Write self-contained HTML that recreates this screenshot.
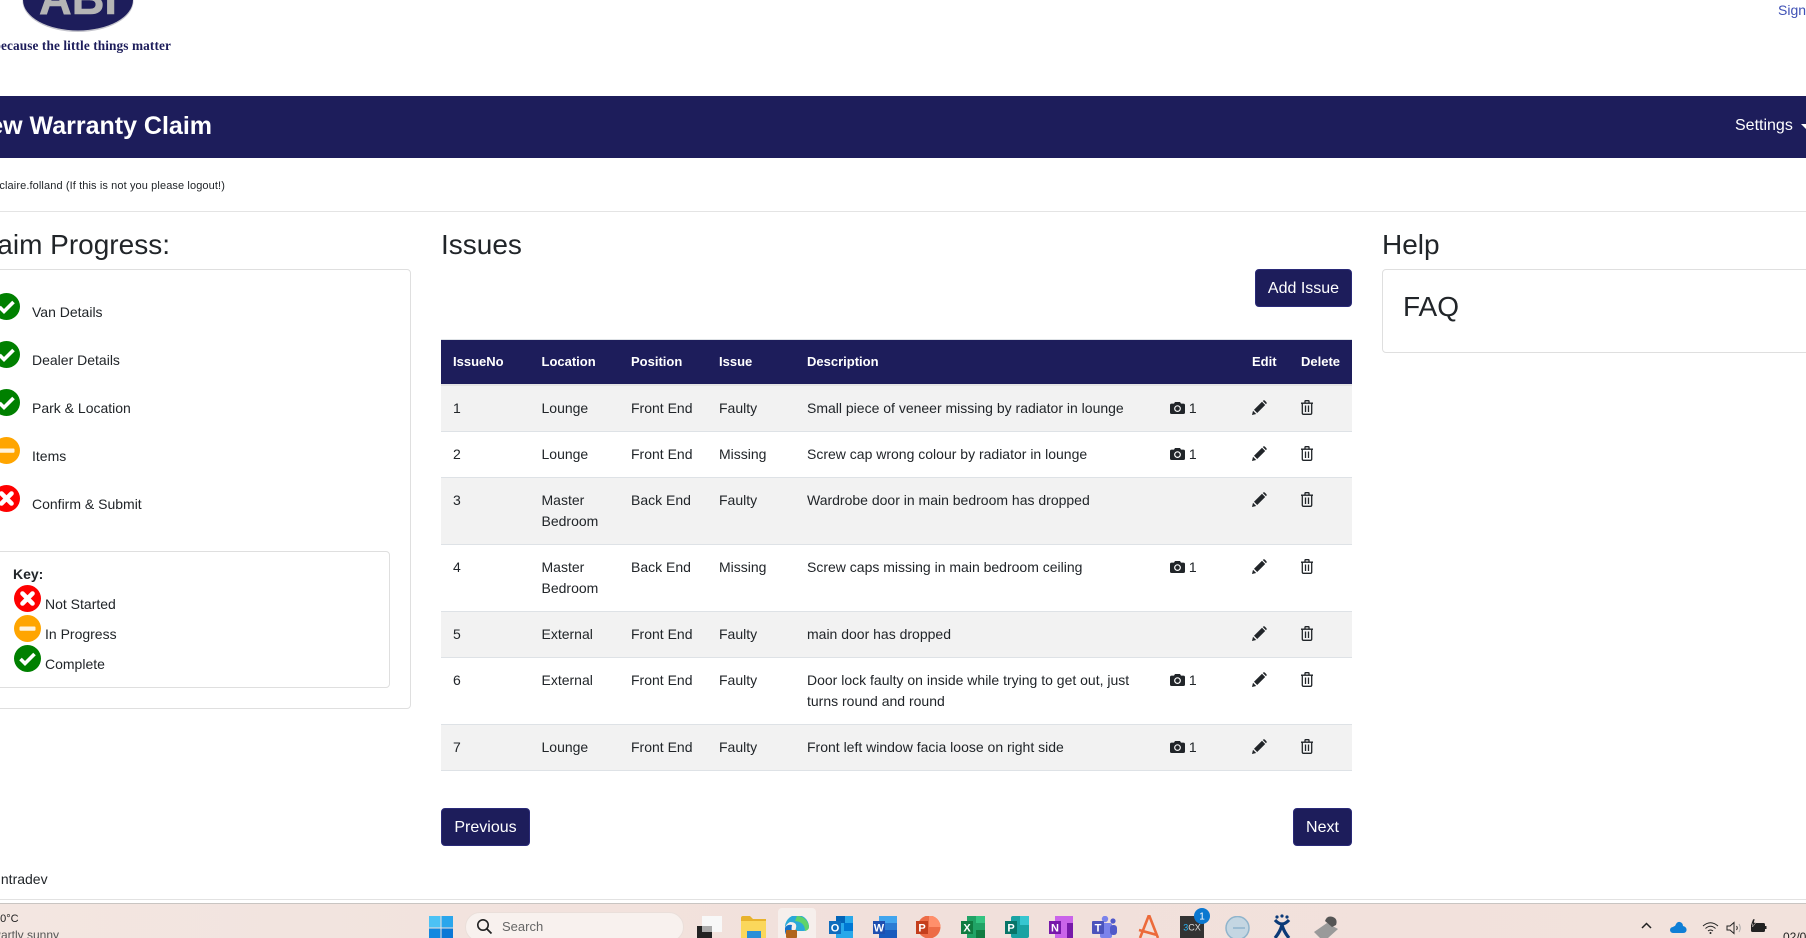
<!DOCTYPE html>
<html lang="en"><head><meta charset="utf-8"><title>New Warranty Claim</title>
<style>
html,body{margin:0;padding:0;width:1806px;height:938px;overflow:hidden;background:#fff}
body{position:relative;font-family:"Liberation Sans",Arial,sans-serif;font-size:14px;color:#212529}
.a{position:absolute;white-space:nowrap}
.h{font-size:28px;line-height:34px}
.card{position:absolute;border:1px solid #dfdfdf;border-radius:4px;box-sizing:border-box;background:#fff}
.btn{position:absolute;background:#1d1d5b;border:1px solid #2a2a78;border-radius:4px;color:#fff;font-size:16px;line-height:38px;height:38px;box-sizing:border-box;text-align:center}
table{position:absolute;left:441px;top:339px;width:911px;border-collapse:collapse;table-layout:fixed;font-size:14px;line-height:21px}
th{background:#1d1d5b;color:#fff;font-size:13px;font-weight:bold;text-align:left;padding:0 0 2px 12px;height:42px;border-top:1px solid #dee2e6;border-bottom:2px solid #e4e4e4;box-sizing:content-box}
td{padding:12px 12px 12px 12px;vertical-align:top;border-bottom:1px solid #dee2e6;overflow:visible}
tr.s td{background:#f2f2f2}
td.i{padding-left:12px;white-space:nowrap}
.ic{display:inline-block;vertical-align:top;margin-top:4px}
.st{position:absolute;width:27px;height:27px}
.tb{position:absolute}
</style></head><body>

<svg width="0" height="0" style="position:absolute">
<symbol id="ok" viewBox="0 0 27 27"><circle cx="13.5" cy="13.5" r="13.5" fill="#008000"/><path d="M6.5 14 L11 18.5 L20.5 9" fill="none" stroke="#fff" stroke-width="3.6"/></symbol>
<symbol id="pr" viewBox="0 0 27 27"><circle cx="13.5" cy="13.5" r="13.5" fill="#ffa500"/><rect x="5.5" y="11.5" width="16" height="4.2" rx="1" fill="#fff3dd"/></symbol>
<symbol id="no" viewBox="0 0 27 27"><circle cx="13.5" cy="13.5" r="13.5" fill="#ff0000"/><path d="M8.5 8.5 L18.5 18.5 M18.5 8.5 L8.5 18.5" stroke="#fff" stroke-width="4.6" stroke-linecap="round"/></symbol>
<symbol id="cam" viewBox="0 0 15 12"><path fill="#212529" fill-rule="evenodd" d="M0 3.2A1.6 1.6 0 0 1 1.6 1.6H4L5 0H10L11 1.6H13.4A1.6 1.6 0 0 1 15 3.2V10.4A1.6 1.6 0 0 1 13.4 12H1.6A1.6 1.6 0 0 1 0 10.4ZM7.5 3.2A3.4 3.4 0 1 0 7.5 10A3.4 3.4 0 1 0 7.5 3.2Z"/><circle cx="7.5" cy="6.6" r="2.2" fill="#212529"/></symbol>
<symbol id="pen" viewBox="0 0 15 15"><path fill="#212529" d="M0 15L1 10.8L4.2 14ZM2 9.8L10 1.8L13.2 5L5.2 13ZM11 .8Q12-.2 13 .8L14.2 2Q15.2 3 14.2 4L14 4.2L10.8 1Z"/></symbol>
<symbol id="tr" viewBox="0 0 12 15"><path fill="none" stroke="#212529" stroke-width="1.3" d="M0 3.2H12M4 3V1.2Q4 .7 4.5 .7H7.5Q8 .7 8 1.2V3M1.3 3.2V13Q1.3 14.3 2.6 14.3H9.4Q10.7 14.3 10.7 13V3.2M4.5 5.5V12M7.5 5.5V12"/></symbol>
</svg>

<!-- logo -->
<svg class="a" style="left:0;top:0" width="180" height="36" viewBox="0 0 180 36">
<ellipse cx="78" cy="1" rx="55.5" ry="31" fill="#c4c4cc"/>
<ellipse cx="78" cy="0" rx="55" ry="30.5" fill="#1d1d5b"/>
<text x="78" y="14" text-anchor="middle" font-family="Liberation Sans" font-weight="bold" font-size="46" fill="#b5b5b5" stroke="#b5b5b5" stroke-width=".6" textLength="78" lengthAdjust="spacingAndGlyphs">ABI</text>
</svg>
<div class="a" style="right:1635px;top:38px;font:bold 13.3px/16px 'Liberation Serif',serif;color:#1d1d5b;letter-spacing:.1px">because the little things matter</div>
<div class="a" style="left:1778px;top:2px;color:#3f51b5;line-height:17px">Sign Out</div>

<!-- nav -->
<div class="a" style="left:0;top:96px;width:1806px;height:62px;background:#1d1d5b"></div>
<div class="a" style="right:1594px;top:110px;font-size:25px;line-height:32px;font-weight:bold;color:#fff">New Warranty Claim</div>
<div class="a" style="left:1735px;top:116px;font-size:16px;line-height:19px;color:#fff">Settings</div>
<div class="a" style="left:1801px;top:124px;width:0;height:0;border-left:5px solid transparent;border-right:5px solid transparent;border-top:5px solid #fff"></div>

<div class="a" style="right:1581px;top:179px;font-size:11px;line-height:14px;letter-spacing:.11px">Logged in as claire.folland (If this is not you please logout!)</div>
<div class="a" style="left:0;top:211px;width:1806px;height:1px;background:#e4e4e4"></div>

<!-- left column -->
<div class="a h" style="right:1636px;top:228px">Claim Progress:</div>
<div class="card" style="left:-29px;top:269px;width:440px;height:440px"></div>
<svg class="st" style="left:-7px;top:293px"><use href="#ok"/></svg>
<svg class="st" style="left:-7px;top:341px"><use href="#ok"/></svg>
<svg class="st" style="left:-7px;top:389px"><use href="#ok"/></svg>
<svg class="st" style="left:-7px;top:437px"><use href="#pr"/></svg>
<svg class="st" style="left:-7px;top:485px"><use href="#no"/></svg>
<div class="a" style="left:32px;top:304px;line-height:16px">Van Details</div>
<div class="a" style="left:32px;top:352px;line-height:16px">Dealer Details</div>
<div class="a" style="left:32px;top:400px;line-height:16px">Park &amp; Location</div>
<div class="a" style="left:32px;top:448px;line-height:16px">Items</div>
<div class="a" style="left:32px;top:496px;line-height:16px">Confirm &amp; Submit</div>

<div class="card" style="left:-8px;top:551px;width:398px;height:137px"></div>
<div class="a" style="left:13px;top:566px;line-height:16px;font-weight:bold">Key:</div>
<svg class="st" style="left:13.500px;top:585px"><use href="#no"/></svg>
<svg class="st" style="left:13.500px;top:615px"><use href="#pr"/></svg>
<svg class="st" style="left:13.500px;top:645px"><use href="#ok"/></svg>
<div class="a" style="left:45px;top:596px;line-height:16px">Not Started</div>
<div class="a" style="left:45px;top:626px;line-height:16px">In Progress</div>
<div class="a" style="left:45px;top:656px;line-height:16px">Complete</div>

<!-- middle -->
<div class="a h" style="left:441px;top:228px">Issues</div>
<div class="btn" style="left:1255px;top:269px;width:97px">Add Issue</div>

<table>
<colgroup><col style="width:88.500px"><col style="width:89.500px"><col style="width:88px"><col style="width:88px"><col style="width:363px"><col style="width:82px"><col style="width:49px"><col style="width:63px"></colgroup>
<tr><th>IssueNo</th><th>Location</th><th>Position</th><th>Issue</th><th>Description</th><th></th><th>Edit</th><th>Delete</th></tr>
<tr class="s"><td>1</td><td>Lounge</td><td>Front End</td><td>Faulty</td><td>Small piece of veneer missing by radiator in lounge</td><td class="i"><svg class="ic" width="15" height="12"><use href="#cam"/></svg> 1</td><td class="i"><svg class="ic" style="margin-top:2px" width="15" height="15"><use href="#pen"/></svg></td><td class="i"><svg class="ic" style="margin-top:2px" width="12" height="15"><use href="#tr"/></svg></td></tr>
<tr><td>2</td><td>Lounge</td><td>Front End</td><td>Missing</td><td>Screw cap wrong colour by radiator in lounge</td><td class="i"><svg class="ic" width="15" height="12"><use href="#cam"/></svg> 1</td><td class="i"><svg class="ic" style="margin-top:2px" width="15" height="15"><use href="#pen"/></svg></td><td class="i"><svg class="ic" style="margin-top:2px" width="12" height="15"><use href="#tr"/></svg></td></tr>
<tr class="s"><td>3</td><td>Master Bedroom</td><td>Back End</td><td>Faulty</td><td>Wardrobe door in main bedroom has dropped</td><td class="i"></td><td class="i"><svg class="ic" style="margin-top:2px" width="15" height="15"><use href="#pen"/></svg></td><td class="i"><svg class="ic" style="margin-top:2px" width="12" height="15"><use href="#tr"/></svg></td></tr>
<tr><td>4</td><td>Master Bedroom</td><td>Back End</td><td>Missing</td><td>Screw caps missing in main bedroom ceiling</td><td class="i"><svg class="ic" width="15" height="12"><use href="#cam"/></svg> 1</td><td class="i"><svg class="ic" style="margin-top:2px" width="15" height="15"><use href="#pen"/></svg></td><td class="i"><svg class="ic" style="margin-top:2px" width="12" height="15"><use href="#tr"/></svg></td></tr>
<tr class="s"><td>5</td><td>External</td><td>Front End</td><td>Faulty</td><td>main door has dropped</td><td class="i"></td><td class="i"><svg class="ic" style="margin-top:2px" width="15" height="15"><use href="#pen"/></svg></td><td class="i"><svg class="ic" style="margin-top:2px" width="12" height="15"><use href="#tr"/></svg></td></tr>
<tr><td>6</td><td>External</td><td>Front End</td><td>Faulty</td><td>Door lock faulty on inside while trying to get out, just turns round and round</td><td class="i"><svg class="ic" width="15" height="12"><use href="#cam"/></svg> 1</td><td class="i"><svg class="ic" style="margin-top:2px" width="15" height="15"><use href="#pen"/></svg></td><td class="i"><svg class="ic" style="margin-top:2px" width="12" height="15"><use href="#tr"/></svg></td></tr>
<tr class="s"><td>7</td><td>Lounge</td><td>Front End</td><td>Faulty</td><td>Front left window facia loose on right side</td><td class="i"><svg class="ic" width="15" height="12"><use href="#cam"/></svg> 1</td><td class="i"><svg class="ic" style="margin-top:2px" width="15" height="15"><use href="#pen"/></svg></td><td class="i"><svg class="ic" style="margin-top:2px" width="12" height="15"><use href="#tr"/></svg></td></tr>
</table>

<div class="btn" style="left:441px;top:808px;width:89px">Previous</div>
<div class="btn" style="left:1293px;top:808px;width:59px">Next</div>

<!-- right -->
<div class="a h" style="left:1382px;top:228px">Help</div>
<div class="card" style="left:1382px;top:269px;width:460px;height:84px"></div>
<div class="a h" style="left:1403px;top:290px">FAQ</div>

<!-- footer -->
<div class="a" style="left:-3px;top:871px;line-height:17px">Intradev</div>
<div class="a" style="left:0;top:899px;width:1806px;height:1px;background:#e2e2e2"></div>

<!-- taskbar -->
<div class="a" style="left:0;top:903px;width:1806px;height:35px;background:linear-gradient(90deg,#f3e6e1,#f1e0db 50%,#f2e2dc);border-top:1px solid #c9c5c2;box-sizing:border-box;overflow:hidden"></div>
<div class="a" style="left:-6px;top:912px;font-size:11px;line-height:14px;color:#222">10°C</div>
<div class="a" style="left:-7px;top:928px;font-size:12px;line-height:14px;color:#555">Partly sunny</div>

<svg class="tb" style="left:429px;top:916px" width="24" height="22"><rect width="11.5" height="11.5" fill="#4cc2f5"/><rect x="12.5" width="11.5" height="11.5" fill="#2aa6ec"/><rect y="12.5" width="11.5" height="11.5" fill="#1288e0"/><rect x="12.5" y="12.5" width="11.5" height="11.5" fill="#0a78d6"/></svg>
<div class="a" style="left:465px;top:912px;width:219px;height:30px;background:#f8f1ee;border:1px solid #eadfda;border-radius:15px;box-sizing:border-box"></div>
<svg class="tb" style="left:476px;top:918px" width="17" height="17"><circle cx="7" cy="7" r="5.2" fill="none" stroke="#222" stroke-width="1.6"/><path d="M11 11L15.5 15.5" stroke="#222" stroke-width="1.8"/></svg>
<div class="a" style="left:502px;top:918px;font-size:13px;line-height:17px;color:#666">Search</div>

<svg class="tb" style="left:697px;top:916px" width="25" height="22"><rect y="10" width="15" height="14" fill="#222"/><rect x="5" width="20" height="16" fill="#f8f8f8"/><rect x="5" y="10" width="10" height="6" fill="#aaa"/></svg>
<svg class="tb" style="left:741px;top:916px" width="25" height="22"><path d="M0 2Q0 0 2 0H9L12 3H25V22H0Z" fill="#e8b22c"/><rect y="5" width="25" height="17" fill="#fbd75b"/><rect x="6" y="15" width="14" height="7" fill="#2a8fd8"/></svg>
<div class="a" style="left:778px;top:908px;width:38px;height:30px;background:#f6efec;border-radius:4px 4px 0 0"></div>
<svg class="tb" style="left:785px;top:916px" width="25" height="22"><path d="M0 12A12 12 0 0 1 24 10Q24 15 18 15H10Q14 6 5 6Q1 8 0 12Z" fill="#2aa9d8"/><path d="M12 0A12 12 0 0 1 24 11Q24 14 20 15Q20 6 10 5Z" fill="#5fd36a"/><path d="M0 12Q-1 20 6 22H12Q5 18 7 9Q2 8 0 12Z" fill="#1371c9"/><rect x="1" y="14" width="11" height="8" rx="1" fill="#b0641c"/></svg>
<svg class="tb" style="left:829px;top:916px" width="25" height="22"><rect x="7" width="17" height="22" fill="#28a8ea"/><rect x="7" width="9" height="7" fill="#0364b8"/><rect x="15" y="7" width="9" height="8" fill="#0078d4"/><rect y="5" width="12" height="13" fill="#0f6cbd"/><text x="6" y="15.5" text-anchor="middle" font-family="Liberation Sans" font-weight="bold" font-size="11" fill="#fff">O</text></svg>
<svg class="tb" style="left:873px;top:916px" width="25" height="22"><rect x="6" width="18" height="7" fill="#41a5ee"/><rect x="6" y="7" width="18" height="7" fill="#2b7cd3"/><rect x="6" y="14" width="18" height="8" fill="#185abd"/><rect y="5" width="12" height="13" fill="#1e4fb0"/><text x="6" y="15.5" text-anchor="middle" font-family="Liberation Sans" font-weight="bold" font-size="11" fill="#fff">W</text></svg>
<svg class="tb" style="left:916px;top:916px" width="25" height="22"><circle cx="13" cy="11" r="11.5" fill="#ed6c47"/><path d="M13 -.5A11.5 11.5 0 0 1 24.5 11H13Z" fill="#ff8f6b"/><rect y="5" width="12" height="13" fill="#c43e1c"/><text x="6" y="15.5" text-anchor="middle" font-family="Liberation Sans" font-weight="bold" font-size="11" fill="#fff">P</text></svg>
<svg class="tb" style="left:961px;top:916px" width="25" height="22"><rect x="6" width="18" height="22" fill="#21a366"/><rect x="15" width="9" height="7" fill="#33c481"/><rect x="15" y="14" width="9" height="8" fill="#107c41"/><rect y="5" width="12" height="13" fill="#107c41"/><text x="6" y="15.5" text-anchor="middle" font-family="Liberation Sans" font-weight="bold" font-size="11" fill="#fff">X</text></svg>
<svg class="tb" style="left:1005px;top:916px" width="25" height="22"><rect x="6" width="18" height="22" rx="2" fill="#1aa3a3"/><rect x="15" width="9" height="9" fill="#37c6d0"/><rect y="5" width="12" height="13" fill="#077568"/><text x="6" y="15.5" text-anchor="middle" font-family="Liberation Sans" font-weight="bold" font-size="11" fill="#fff">P</text></svg>
<svg class="tb" style="left:1049px;top:916px" width="25" height="22"><rect x="6" width="18" height="22" fill="#ca64ea"/><rect x="18" y="7" width="6" height="15" fill="#7719aa"/><rect y="5" width="12" height="13" fill="#7719aa"/><text x="6" y="15.5" text-anchor="middle" font-family="Liberation Sans" font-weight="bold" font-size="11" fill="#fff">N</text></svg>
<svg class="tb" style="left:1092px;top:916px" width="25" height="22"><circle cx="13" cy="3" r="3.2" fill="#7b83eb"/><circle cx="21" cy="5" r="2.6" fill="#5059c9"/><rect x="8" y="7" width="12" height="15" rx="2" fill="#7b83eb"/><rect x="18" y="9" width="7" height="10" rx="3" fill="#5059c9"/><rect y="5" width="12" height="13" rx="1" fill="#4b53bc"/><text x="6" y="15.5" text-anchor="middle" font-family="Liberation Sans" font-weight="bold" font-size="11" fill="#fff">T</text></svg>
<svg class="tb" style="left:1138px;top:915px" width="24" height="23"><path d="M11 0L2 23M11 0L20 23M1 15L19 20" fill="none" stroke="#ec6a3a" stroke-width="2.6"/></svg>
<svg class="tb" style="left:1180px;top:916px" width="25" height="22"><rect width="24" height="22" fill="#333"/><text x="12" y="14.5" text-anchor="middle" font-family="Liberation Sans" font-size="9" fill="#ddd"><tspan fill="#29b6f6">3</tspan>CX</text></svg>
<svg class="tb" style="left:1194px;top:908px" width="16" height="16"><circle cx="8" cy="8" r="8" fill="#0b78d0"/><text x="8" y="11.5" text-anchor="middle" font-family="Liberation Sans" font-size="10" fill="#fff">1</text></svg>
<svg class="tb" style="left:1225px;top:916px" width="25" height="22"><circle cx="12.5" cy="12" r="11.5" fill="#c4d6e2" stroke="#8fb4cc" stroke-width="1.5"/><path d="M8 12H20" stroke="#8fb4cc" stroke-width="1.5"/></svg>
<svg class="tb" style="left:1272px;top:914px" width="20" height="24"><circle cx="5" cy="3" r="1.6" fill="#0b3a78"/><circle cx="10" cy="2" r="1.6" fill="#0b3a78"/><circle cx="15" cy="3" r="1.6" fill="#0b3a78"/><path d="M3 6Q10 14 17 6M10 11Q8 18 3 24M10 11Q12 18 17 24" fill="none" stroke="#0b3a78" stroke-width="3.2"/></svg>
<svg class="tb" style="left:1312px;top:915px" width="28" height="23"><path d="M2 17L15 8L26 14L16 23H8Z" fill="#9a9a9a"/><path d="M13 6Q15 0 21 2Q26 4 24 10L20 12Z" fill="#555"/></svg>

<svg class="tb" style="left:1641px;top:922px" width="11" height="8"><path d="M1 6L5.5 1.5L10 6" fill="none" stroke="#222" stroke-width="1.5"/></svg>
<svg class="tb" style="left:1670px;top:921px" width="17" height="12"><path d="M3 12A3 3 0 0 1 3 6Q4 5 5 5Q7 0 10 1Q13 2 13 5Q17 6 16.5 9.5Q16 12 13 12Z" fill="#0f7fd6"/></svg>
<svg class="tb" style="left:1702px;top:921px" width="17" height="14" fill="none" stroke="#222" stroke-width="1"><path d="M1 5Q8.500 -1.500 16 5M3.500 7.500Q8.500 3 13.500 7.500M6 10Q8.500 8 11 10"/><circle cx="8.500" cy="12" r="1" fill="#222" stroke="none"/></svg>
<svg class="tb" style="left:1726px;top:921px" width="17" height="14" fill="none" stroke="#222" stroke-width="1"><path d="M1 5H4L8 1.500V12.500L4 9H1Z"/><path d="M10.500 5Q12 7 10.500 9"/><path d="M13 3Q15.500 7 13 11" stroke="#aaa"/></svg>
<svg class="tb" style="left:1750px;top:919px" width="17" height="14"><rect x="1" y="4" width="14" height="9" rx="1.500" fill="#222"/><rect x="15" y="7" width="1.500" height="3" fill="#222"/><path d="M3 0L1 5H3L2.500 8L6 3.500H4L5 0Z" fill="#222" stroke="#f2e2dc" stroke-width=".5"/></svg>
<div class="a" style="left:1783px;top:930px;font-size:12px;line-height:14px;color:#222">02/02/2024</div>
</body></html>
